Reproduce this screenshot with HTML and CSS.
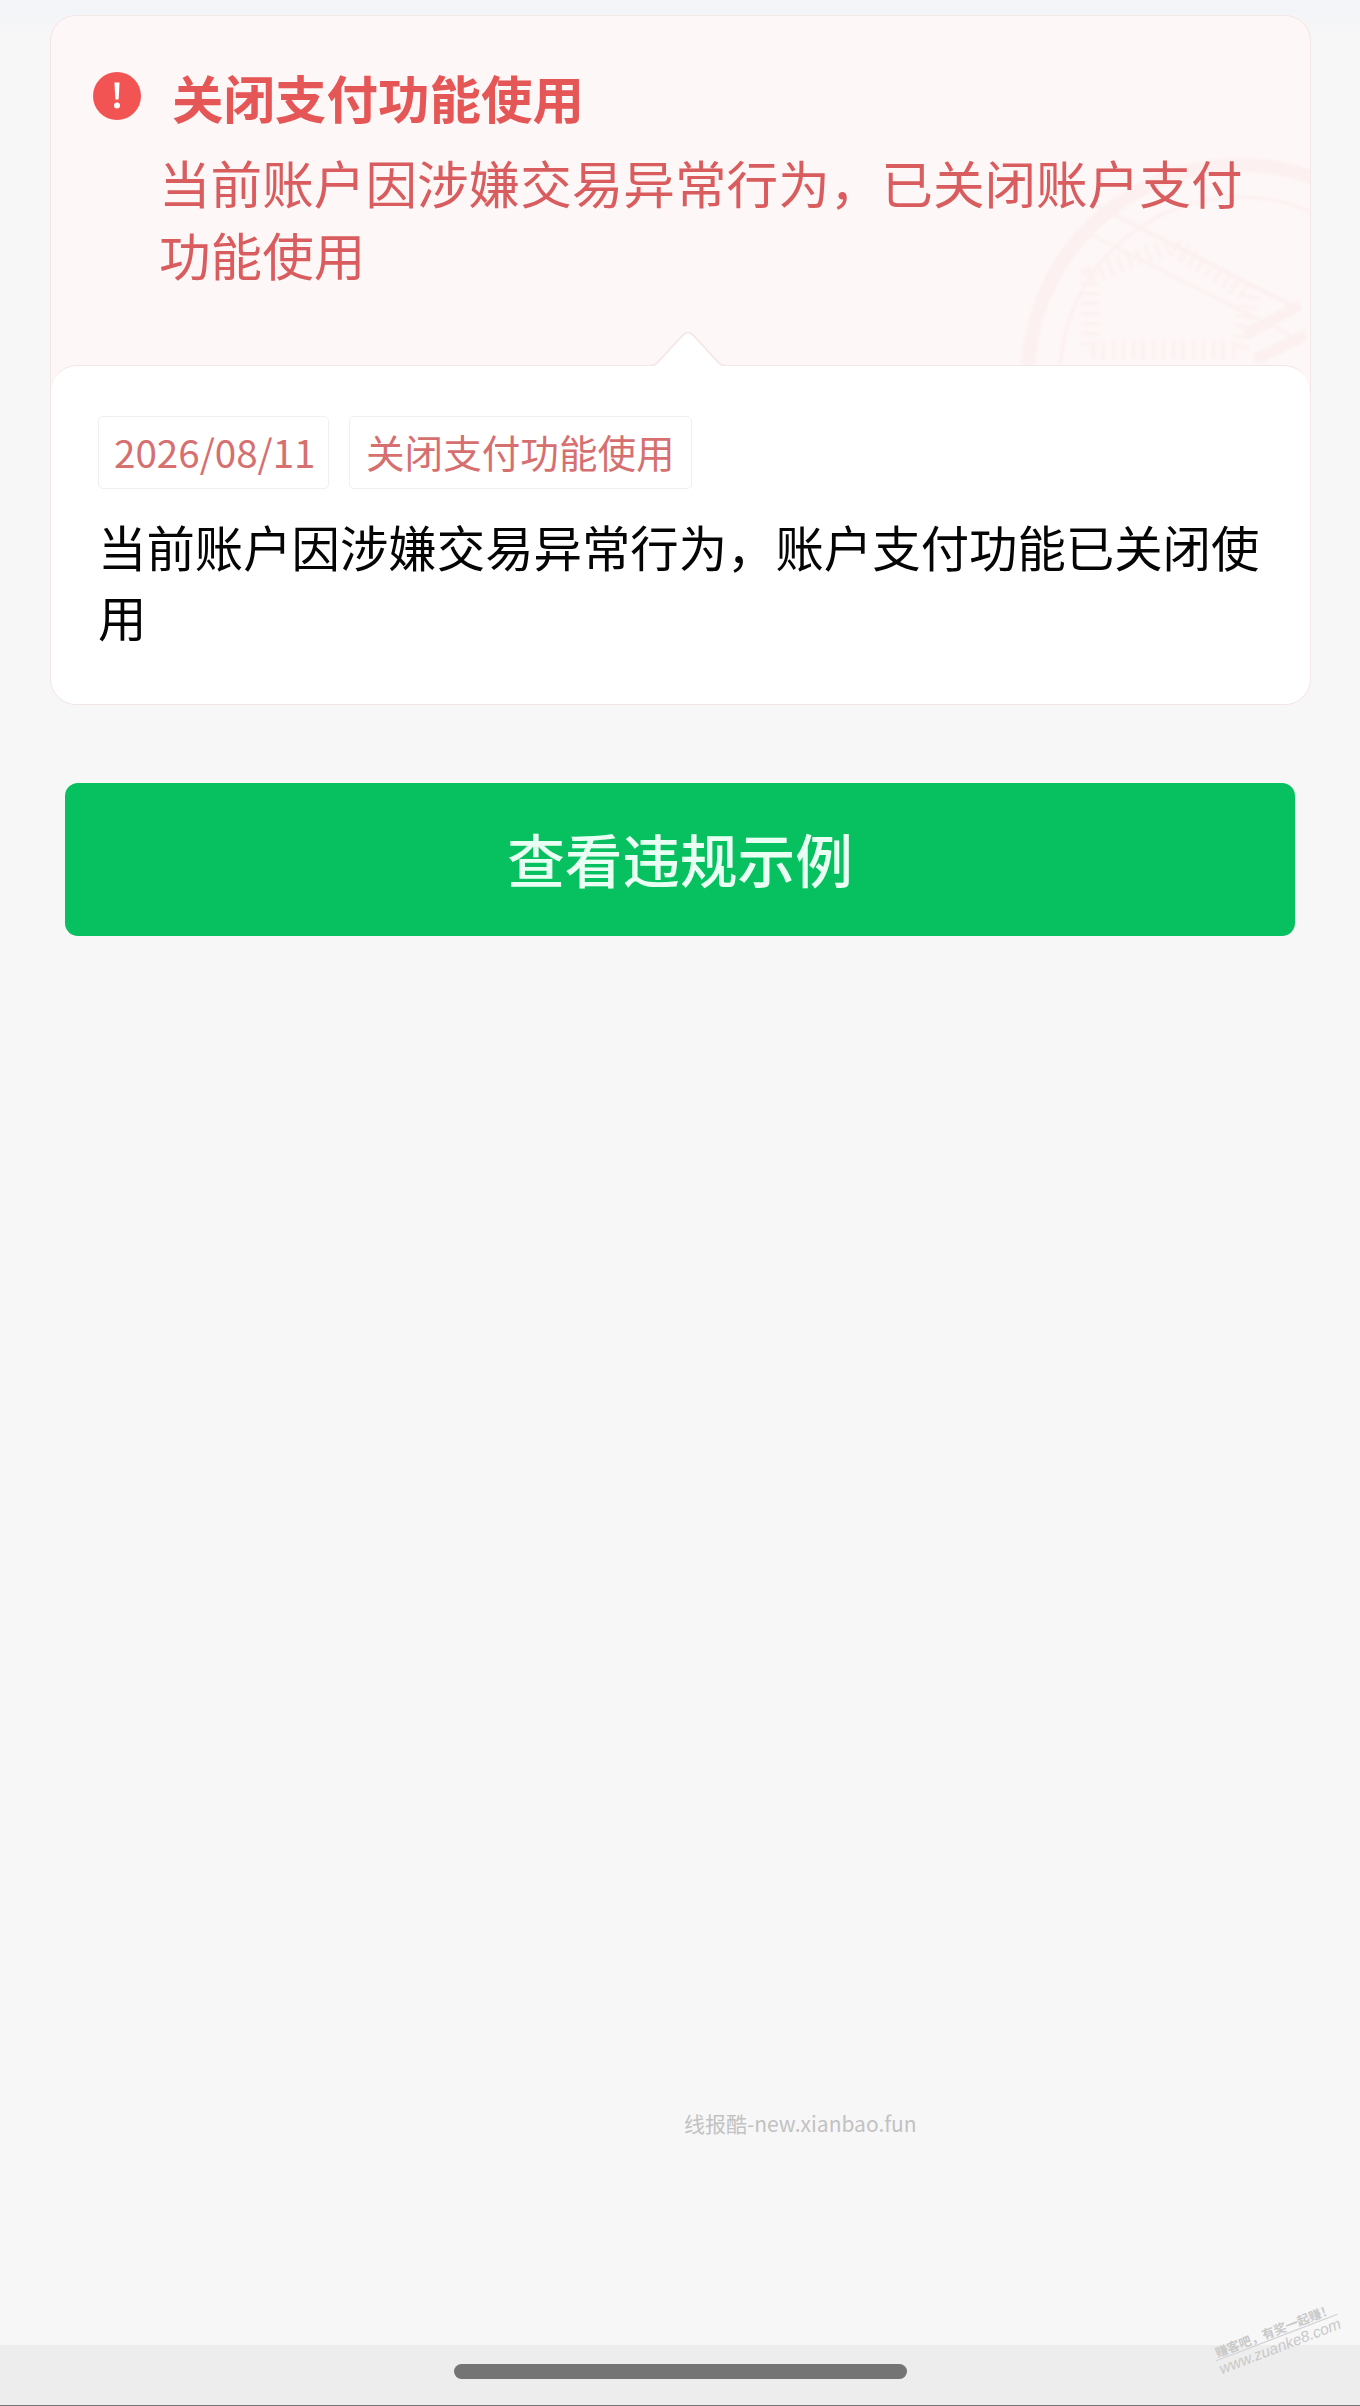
FILE: index.html
```html
<!DOCTYPE html>
<html lang="zh-CN">
<head>
<meta charset="utf-8">
<title>关闭支付功能使用</title>
<link rel="stylesheet" href="styles.css">
</head>
<body>
<div class="page">
  <main class="content">
    <section class="card">
      <header class="notice">
        <svg class="stamp" viewBox="0 0 290 220" aria-hidden="true">
          <g fill="none" stroke="#fcf0f0">
            <circle cx="220" cy="232" r="212" stroke-width="14"/>
            <circle cx="220" cy="232" r="180" stroke-width="3"/>
            <path d="M75 60 L280 165" stroke-width="4"/>
            <path d="M62 85 L270 190" stroke-width="3"/>
            <path d="M70 130 L150 100 L230 150 L220 205 L70 205 Z" stroke-width="18" stroke-dasharray="4 6" opacity=".7"/>
            <path d="M225 190 L280 160 M235 215 L285 190" stroke-width="11"/>
          </g>
        </svg>
        <div class="title-row">
          <svg class="alert" viewBox="0 0 48 48" aria-hidden="true">
            <circle cx="24" cy="24" r="24" fill="#f25353"/>
            <path d="M21.4 10.5h5.2l-1 17h-3.2z" fill="#fff"/>
            <circle cx="24" cy="33.5" r="3" fill="#fff"/>
          </svg>
          <h1 class="title">关闭支付功能使用</h1>
        </div>
        <p class="summary">当前账户因涉嫌交易异常行为，已关闭账户支付功能使用</p>
      </header>
      <div class="detail">
        <svg class="notch" viewBox="0 0 74 34" aria-hidden="true">
          <path d="M0 33.5 C3 33.5 4 33 6 31 L32 3 C35 0 39 0 42 3 L68 31 C70 33 71 33.5 74 33.5 L74 34 L0 34 Z" fill="#fff"/>
          <path d="M0 33.5 C3 33.5 4 33 6 31 L32 3 C35 0 39 0 42 3 L68 31 C70 33 71 33.5 74 33.5" fill="none" stroke="#f3e4e2" stroke-width="1.5"/>
        </svg>
        <div class="tags">
          <span class="tag tag-date">2026/08/11</span>
          <span class="tag">关闭支付功能使用</span>
        </div>
        <p class="reason">当前账户因涉嫌交易异常行为，账户支付功能已关闭使用</p>
      </div>
    </section>
    <a class="action">查看违规示例</a>
    <div class="source">线报酷-new.xianbao.fun</div>
  </main>
  <footer class="home-bar">
    <span class="home-handle"></span>
  </footer>
  <div class="mark">
    <span class="mark-top">赚客吧，有奖一起赚！</span>
    <span class="mark-bottom">www.zuanke8.com</span>
  </div>
</div>
</body>
</html>
```

FILE: styles.css
```css
* { box-sizing: border-box; }
html, body { margin: 0; padding: 0; }
body {
  font-family: "Noto Sans CJK SC", "Noto Sans", sans-serif;
  background: #f7f7f7;
}
.page {
  position: relative;
  width: 1360px;
  height: 2406px;
  display: flex;
  flex-direction: column;
  overflow: hidden;
  background: linear-gradient(#f3f5f8 0, #f4f5f8 12px, #f7f7f7 40px);
}
.content {
  flex: 1;
  padding: 15px 49px 0 50px;
  display: flex;
  flex-direction: column;
}
.card {
  width: 1261px;
  height: 690px;
  border: 1.5px solid #f3e6e4;
  border-radius: 26px;
  background: #fef7f7;
  display: flex;
  flex-direction: column;
}
.notice {
  position: relative;
  height: 349px;
  flex: none;
  padding: 50px 0 0 42px;
  border-radius: 26px 26px 0 0;
  overflow: hidden;
}
.stamp {
  position: absolute;
  right: 0;
  bottom: 0;
  width: 290px;
  height: 220px;
  filter: blur(1px);
}
.title-row {
  position: relative;
  display: flex;
  align-items: center;
  height: 60px;
  gap: 31px;
}
.alert { width: 48px; height: 48px; flex: none; }
.title {
  margin: 0;
  font-size: 51.5px;
  font-weight: 700;
  line-height: 61px;
  color: #e55656;
}
.summary {
  position: relative;
  margin: 20px 0 0 66px;
  width: 1100px;
  font-size: 51.6px;
  line-height: 72px;
  color: #d95c5e;
}
.detail {
  position: relative;
  flex: 1;
  background: #fff;
  border-top: 1.5px solid #f3e6e4;
  border-radius: 26px;
  padding: 50px 40px 0 47px;
}
.notch {
  position: absolute;
  left: 600px;
  top: -34px;
  width: 74px;
  height: 34px;
}
.tags { display: flex; gap: 20px; }
.tag {
  height: 73px;
  padding: 0 16px;
  border: 1.5px solid #f2eeee;
  border-radius: 5px;
  font-size: 38.6px;
  line-height: 68px;
  color: #d66f6f;
  white-space: nowrap;
}
.tag-date { padding: 0 12.5px 0 15px; }
.reason {
  margin: 22px 0 0 0;
  width: 1180px;
  font-size: 48.4px;
  line-height: 70px;
  color: #050505;
}
.action {
  display: block;
  margin: 78px 0 0 15px;
  width: 1230px;
  height: 153px;
  border-radius: 13px;
  background: #07c160;
  font-size: 57.6px;
  font-weight: 500;
  line-height: 151px;
  text-align: center;
  color: #eafff3;
}
.source {
  margin: 1172px 0 0 634px;
  font-size: 21px;
  line-height: 30px;
  color: #c2c2c2;
  white-space: nowrap;
}
.home-bar {
  height: 61px;
  flex: none;
  background: #ededed;
  border-bottom: 1px solid #777;
  padding-top: 19px;
  display: flex;
  justify-content: center;
  align-items: flex-start;
}
.home-handle {
  width: 453px;
  height: 15px;
  border-radius: 8px;
  background: #747474;
}
.mark {
  position: absolute;
  left: 1212px;
  top: 2322px;
  width: 130px;
  display: flex;
  flex-direction: column;
  transform: rotate(-21deg);
  color: #c9c9c9;
  text-align: center;
}
.mark-top {
  font-size: 12.5px;
  line-height: 15px;
  font-weight: 700;
  border-bottom: 1px solid #d0d0d0;
  white-space: nowrap;
}
.mark-bottom {
  font-family: "Liberation Sans", sans-serif;
  font-size: 15.5px;
  line-height: 17px;
  font-style: italic;
  white-space: nowrap;
}
```
